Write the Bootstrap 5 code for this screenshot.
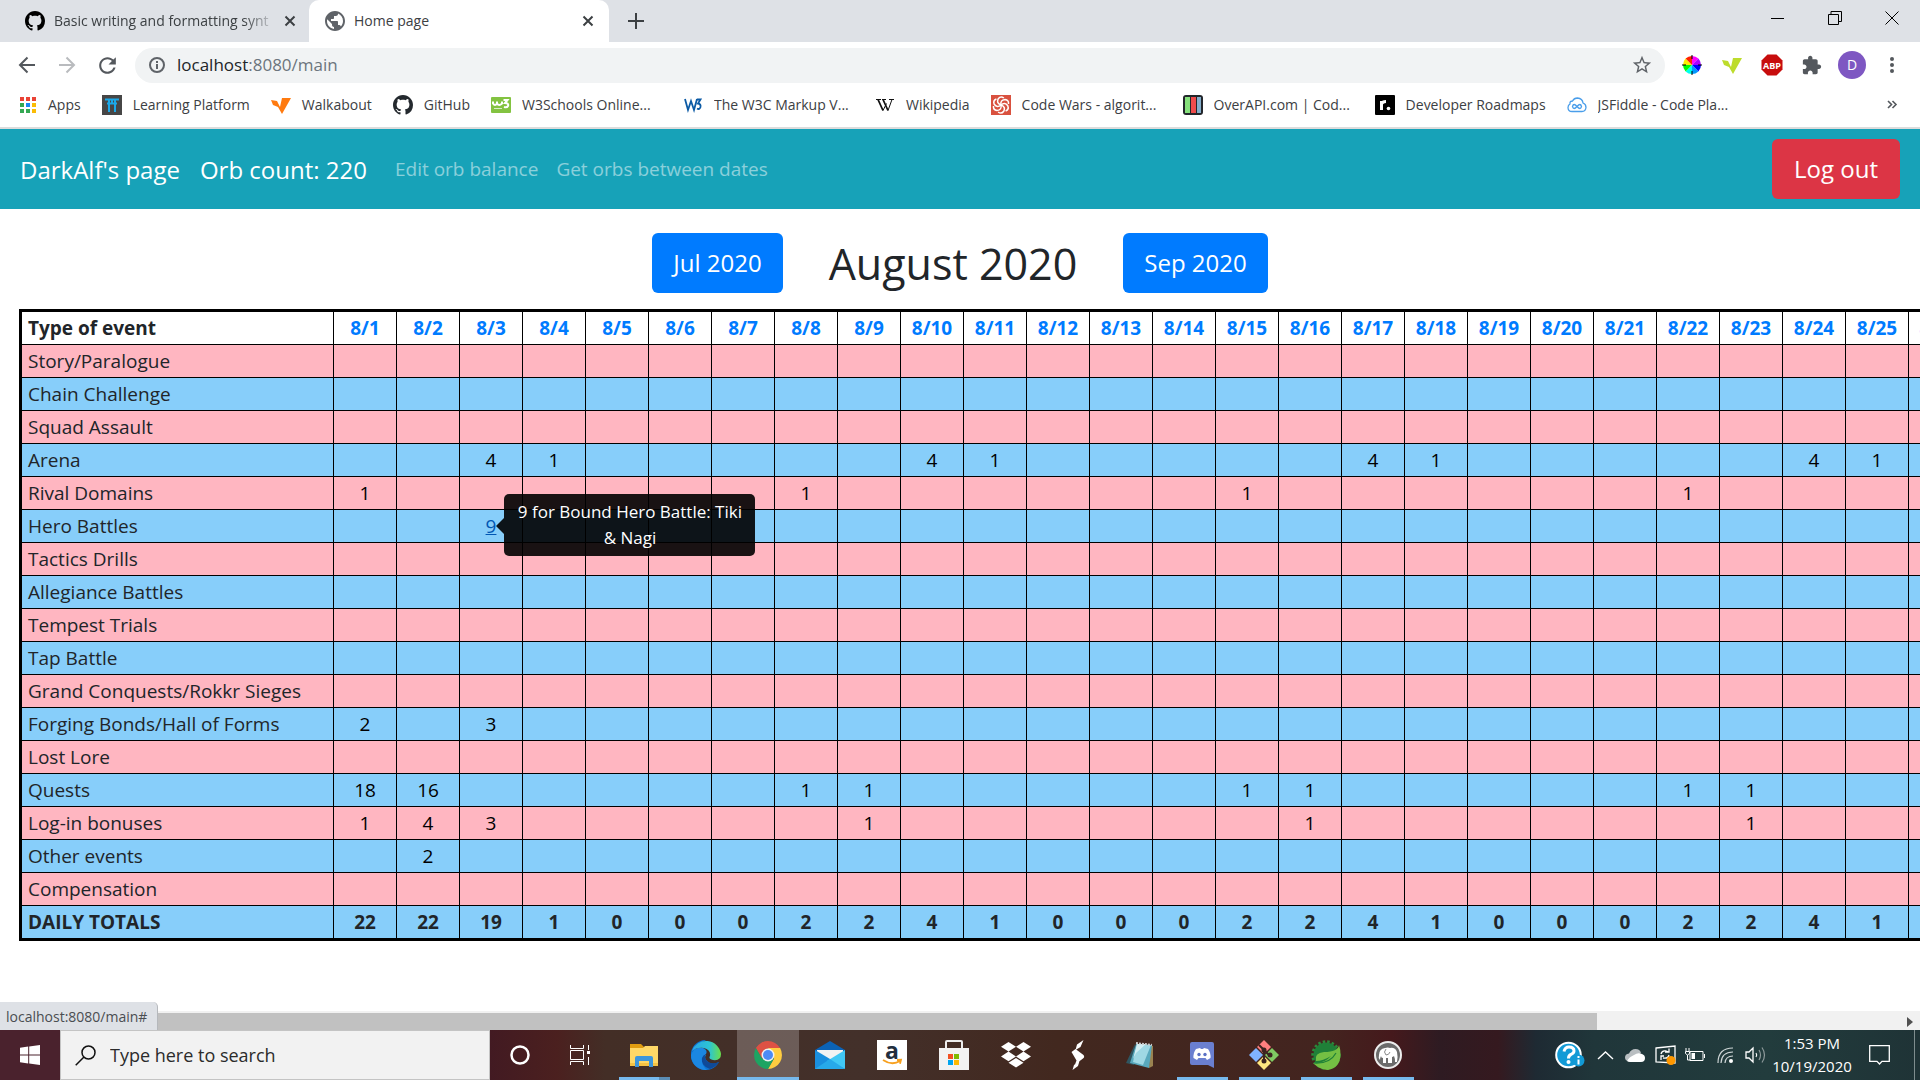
<!DOCTYPE html>
<html lang="en">
<head>
<meta charset="utf-8">
<meta name="viewport" content="width=device-width, initial-scale=1">
<title>Home page</title>
<link href="https://cdn.jsdelivr.net/npm/bootstrap@5.3.0/dist/css/bootstrap.min.css" rel="stylesheet">
<style>
  body { font-family: "Open Sans", "Noto Sans", sans-serif; color: #212529; background: #fff; }
  button, input { font-family: inherit; }
  svg { display: block; flex: none; }
  .plain { border: 0; background: none; padding: 0; display: flex; align-items: center; justify-content: center; flex: none; }

  /* tab strip */
  .tabstrip { height: 42px; background: #dee1e6; font-size: 14px; color: #3c4043; }
  .tab-item { width: 300px; height: 42px; padding: 0 12px 0 16px; }
  .tab-idle { width: 309px; padding: 0 10px 0 25px; }
  .tab-live { background: #fff; border-radius: 10px 10px 0 0; }
  .tab-idle .tab-label { -webkit-mask-image: linear-gradient(90deg, #000 85%, transparent); mask-image: linear-gradient(90deg, #000 85%, transparent); }
  .tab-label { overflow: hidden; white-space: nowrap; padding-bottom: 2px; margin-left: 9px; }
  .tab-x { width: 18px; height: 18px; }
  .tab-new { width: 54px; height: 42px; }
  .win-btn { width: 57px; height: 36px; }

  /* toolbar */
  .toolbar { height: 46px; padding: 0 8px 0 7px; }
  .tool-btn { width: 40px; height: 40px; }
  .omnibox { height: 35px; border-radius: 18px; background: #f1f3f4; padding: 0 12px; margin-left: 8px; margin-right: 7px; font-size: 17px; }
  .omnibox .url { margin-left: 10px; }
  .avatar-dot { width: 28px; height: 28px; border-radius: 50%; background: #7e57c2; color: #fff; font-size: 14px; line-height: 28px; }

  /* bookmarks */
  .bookmarks { height: 41px; padding: 0 18px 6px 18px; border-bottom: 2px solid #dcdcdc; gap: 21px; font-size: 14px; }
  .bookmarks a { color: #3c4043; text-decoration: none; gap: 11px; white-space: nowrap; }
  .bookmarks .clip { width: 140px; overflow: hidden; }

  /* page */
  .site-nav { height: 80px; background: #17a2b8; padding: 0 20px; }
  .site-nav .navbar-brand { font-size: 24px; color: #fff; margin-right: 20px; padding: 1px 0 0; }
  .site-nav .navbar-nav { gap: 2px; }
  .site-nav .nav-link { font-size: 19px; color: rgba(255,255,255,.5); padding: 1px 9px 0; }
  .btn-xl { font-size: 24px; line-height: 38px; padding: 10px 20px; border-radius: 6px; border: 1px solid transparent; }
  .btn-out { background: #dc3545; color: #fff; padding-left: 21px; padding-right: 21px; }
  .btn-month { background: #007bff; color: #fff; }
  .month-bar { gap: 46px; padding-top: 24px; margin-bottom: 16px; }
  .month-bar h1 { font-size: 43px; line-height: 58px; font-weight: 400; margin: 0; padding-top: 2px; }
  .board { padding-left: 19px; overflow: hidden; min-height: 0; }
  .table.orb-table { table-layout: fixed; width: 1953px; border-collapse: collapse; border: 3px solid #000; margin: 0; font-size: 19px; line-height: 30px; }
  .orb-table > :not(caption) > * > * { padding: 1px 0; border: 1px solid #000; text-align: center; background: none; box-shadow: none; color: #212529; }
  .orb-table > :not(caption) > * > :first-child { text-align: left; padding-left: 6px; }
  .orb-table .c-name { width: 313px; }
  .orb-table .c-day { width: 63px; }
  .orb-table tbody tr { background: #87cefa; }
  .orb-table tbody tr:nth-child(odd) { background: #ffb6c1; }
  .orb-table tbody tr:last-child { background: #87cefa; font-weight: 700; }
  .orb-table a { color: #000; text-decoration: none; }
  .orb-table thead a { color: #007bff; }
  .orb-table a.is-hover { color: #0056b3; text-decoration: underline; }
  .tip { position: absolute; left: 100%; top: 50%; transform: translateY(-50%); margin: -1px 0 0 8px; width: 251px; padding: 5px 10px; border-radius: 5px; background: rgba(0,0,0,.9); color: #fff; font-size: 17px; line-height: 26px; z-index: 2; }
  .tip::before { content: ""; position: absolute; right: 100%; top: 24px; border: 8px solid transparent; border-left: 0; border-right-color: rgba(0,0,0,.9); }

  /* scrollbar strip and status bubble */
  .hscroll { height: 19px; background: #f1f1f1; padding: 2px 7px 0 21px; }
  .hthumb { width: 83.3%; height: 17px; background: #c1c1c1; }
  .status-url { position: absolute; left: 0; bottom: 0; height: 28px; width: 158px; padding-left: 6px; background: #dee1e6; border-radius: 0 5px 0 0; border-right: 1px solid #b5b8bc; font-size: 14px; line-height: 29px; color: #4a4d51; }

  /* taskbar */
  .taskbar { height: 50px; flex: none; background: linear-gradient(90deg, #4a222d 0, #4a222d 10%, #421a22 25.5%, #4b201f 29%, #432e26 31.5%, #43302a 45%, #42281f 55%, #43241f 69%, #45191c 72.5%, #2e1b22 75%, #35191f 78%, #1e2a33 80%, #20363a 83%, #223c3d 92%, #1f3336 100%); }
  .start { width: 60px; height: 50px; }
  .find { width: 430px; height: 50px; background: #f2f2f2; border: 1px solid #c4c4c4; padding-left: 14px; gap: 14px; }
  .find input { border: 0; background: none; outline: 0; padding: 0; width: 300px; font-size: 18px; color: #2b2b2b; }
  .find input::placeholder { color: #2b2b2b; opacity: 1; }
  .task { width: 62px; height: 50px; position: relative; }
  .task-sys { width: 60px; }
  .task-sys + .task-run { margin-left: 3px; }
  .task-on { background: rgba(255,255,255,.22); }
  .task-run::after { content: ""; position: absolute; left: 6px; right: 5px; bottom: 0; height: 3px; background: #76b9ed; }
  .task-on::after { left: 0; right: 0; }
  .task-many::after { background: linear-gradient(90deg, #76b9ed 78%, #5b8db5 78%); }
  .tray { width: 30px; height: 50px; }
  .tray-wide { width: 40px; }
  .clock { width: 84px; font-size: 15px; line-height: 23px; color: #fff; text-align: center; flex: none; }
  .note { width: 50px; height: 50px; }
  .desk-edge { width: 6px; height: 50px; margin-left: 10px; border-left: 1px solid #7e8c8d; flex: none; }
</style>
<script src="https://cdn.jsdelivr.net/npm/bootstrap@5.3.0/dist/js/bootstrap.bundle.min.js"></script>
</head>
<body class="d-flex flex-column vh-100 overflow-hidden">

<svg width="0" height="0" class="position-absolute" aria-hidden="true">
  <symbol id="octo" viewBox="0 0 16 16"><path d="M8 0C3.58 0 0 3.58 0 8c0 3.54 2.29 6.53 5.47 7.59.4.07.55-.17.55-.38 0-.19-.01-.82-.01-1.49-2.01.37-2.53-.49-2.69-.94-.09-.23-.48-.94-.82-1.13-.28-.15-.68-.52-.01-.53.63-.01 1.08.58 1.23.82.72 1.21 1.87.87 2.33.66.07-.52.28-.87.51-1.07-1.78-.2-3.64-.89-3.64-3.95 0-.87.31-1.59.82-2.15-.08-.2-.36-1.02.08-2.12 0 0 .67-.21 2.2.82.64-.18 1.32-.27 2-.27.68 0 1.36.09 2 .27 1.53-1.04 2.2-.82 2.2-.82.44 1.1.16 1.92.08 2.12.51.56.82 1.27.82 2.15 0 3.07-1.87 3.75-3.65 3.95.29.25.54.73.54 1.48 0 1.07-.01 1.93-.01 2.2 0 .21.15.46.55.38A8.012 8.012 0 0 0 16 8c0-4.42-3.58-8-8-8z"/></symbol>
  <symbol id="cross" viewBox="0 0 18 18"><path d="M4.500 4.500l9 9M13.500 4.500l-9 9" stroke="#3c4043" stroke-width="2"/></symbol>
  <symbol id="vee" viewBox="0 0 20 20"><path d="M0 5l6 1 3 6 2-9h9l-9 16-4-7-5-2z"/></symbol>
</svg>

<header class="flex-shrink-0">
  <div class="tabstrip d-flex align-items-center">
    <div class="tab-item tab-idle d-flex align-items-center">
      <svg width="20" height="20"><use href="#octo"/></svg>
      <span class="tab-label flex-grow-1 me-1">Basic writing and formatting synt</span>
      <button class="plain tab-x" aria-label="Close tab"><svg width="18" height="18"><use href="#cross"/></svg></button>
    </div>
    <div class="tab-item tab-live d-flex align-items-center">
      <svg width="20" height="20" viewBox="2 2 20 20"><path fill="#5f6368" d="M12 2C6.480 2 2 6.480 2 12s4.480 10 10 10 10-4.480 10-10S17.520 2 12 2zm-1 17.930c-3.950-.49-7-3.850-7-7.930 0-.62.08-1.210.21-1.790L9 15v1c0 1.100.9 2 2 2v1.930zm6.900-2.540c-.26-.81-1-1.390-1.900-1.390h-1v-3c0-.55-.45-1-1-1H8v-2h2c.55 0 1-.45 1-1V7h2c1.100 0 2-.9 2-2v-.41c2.930 1.190 5 4.060 5 7.410 0 2.080-.8 3.970-2.100 5.390z"/></svg>
      <span class="tab-label flex-grow-1">Home page</span>
      <button class="plain tab-x" aria-label="Close tab"><svg width="18" height="18"><use href="#cross"/></svg></button>
    </div>
    <button class="plain tab-new" aria-label="New tab"><svg width="16" height="16" viewBox="0 0 16 16"><path d="M8 0v16M0 8h16" stroke="#3c4043" stroke-width="2"/></svg></button>
    <div class="d-flex ms-auto align-self-start">
      <button class="plain win-btn" aria-label="Minimize"><svg width="14" height="14"><path d="M0 7.500h13" stroke="#000"/></svg></button>
      <button class="plain win-btn" aria-label="Restore"><svg width="14" height="14" viewBox="0 0 14 14"><path d="M.5 3.500h10v10H.5zM3 3.500v-3h10.500v10H11" fill="none" stroke="#000"/></svg></button>
      <button class="plain win-btn" aria-label="Close window"><svg width="14" height="14"><path d="M.5.5l13 13M13.500.5l-13 13" stroke="#000"/></svg></button>
    </div>
  </div>

  <div class="toolbar d-flex align-items-center">
    <button class="plain tool-btn" aria-label="Back"><svg width="24" height="24" viewBox="0 0 24 24"><path fill="none" stroke="#54585d" stroke-width="2" d="M20 12H5M12.500 4.500L5 12l7.500 7.500"/></svg></button>
    <button class="plain tool-btn" aria-label="Forward"><svg width="24" height="24" viewBox="0 0 24 24"><path fill="none" stroke="#b9bbbe" stroke-width="2" d="M4 12h15M11.500 4.500L19 12l-7.500 7.500"/></svg></button>
    <button class="plain tool-btn" aria-label="Reload"><svg width="25" height="25" viewBox="0 0 24 24"><path fill="#54585d" d="M17.650 6.350C16.200 4.900 14.210 4 12 4c-4.420 0-7.990 3.580-7.990 8s3.570 8 7.990 8c3.730 0 6.840-2.550 7.730-6h-2.080c-.82 2.330-3.040 4-5.650 4-3.310 0-6-2.690-6-6s2.690-6 6-6c1.660 0 3.140.69 4.220 1.780L13 11h7V4l-2.350 2.350z"/></svg></button>
    <div class="omnibox d-flex align-items-center flex-grow-1">
      <svg width="20" height="20" viewBox="0 0 20 20"><circle cx="10" cy="10" r="7" fill="none" stroke="#5f6368" stroke-width="2"/><path d="M10 9v5M10 6v2" stroke="#5f6368" stroke-width="2"/></svg>
      <span class="url flex-grow-1"><span class="text-dark">localhost</span><span class="text-secondary">:8080/main</span></span>
      <svg width="22" height="22" viewBox="0 0 24 24"><path fill="#5f6368" d="M22 9.240l-7.190-.62L12 2 9.190 8.630 2 9.240l5.460 4.730L5.820 21 12 17.270 18.180 21l-1.630-7.030L22 9.240zM12 15.400l-3.760 2.270 1-4.280-3.320-2.880 4.380-.38L12 6.100l1.710 4.040 4.380.38-3.320 2.880 1 4.280L12 15.400z"/></svg>
    </div>
    <button class="plain tool-btn" aria-label="Color picker"><svg width="20" height="20" viewBox="-10 -10 20 20"><path fill="#f0f" d="M0 0V-9A9 9 0 0 1 6.400-6.400z"/><path fill="#a0f" d="M0 0L6.400-6.400A9 9 0 0 1 9 0z"/><path fill="#00f" d="M0 0H9A9 9 0 0 1 6.400 6.400z"/><path fill="#09f" d="M0 0L6.400 6.400A9 9 0 0 1 0 9z"/><path fill="#0fe" d="M0 0V9A9 9 0 0 1-6.400 6.400z"/><path fill="#0f0" d="M0 0L-6.400 6.400A9 9 0 0 1-9 0z"/><path fill="#fe0" d="M0 0H-9A9 9 0 0 1-6.400-6.400z"/><path fill="#f20" d="M0 0L-6.400-6.400A9 9 0 0 1 0-9z"/><path stroke="#000" d="M0-10v4M0 6v4M-10 0h4M6 0h4"/></svg></button>
    <button class="plain tool-btn" aria-label="Extension"><svg width="20" height="20" fill="#bddc2c"><use href="#vee"/></svg></button>
    <button class="plain tool-btn" aria-label="ABP"><svg width="22" height="22" viewBox="0 0 22 22"><path fill="#c70d0d" d="M6.500.5h9l6 6v9l-6 6h-9l-6-6v-9z"/><text x="11" y="14.500" font-size="9" font-weight="700" fill="#fff" text-anchor="middle" font-family="Open Sans">ABP</text></svg></button>
    <button class="plain tool-btn" aria-label="Extensions"><svg width="20" height="20" viewBox="1 0 23 23"><path fill="#54585d" d="M20.500 11H19V7c0-1.100-.9-2-2-2h-4V3.500C13 2.120 11.880 1 10.500 1S8 2.120 8 3.500V5H4c-1.100 0-1.990.9-1.990 2v3.800H3.500c1.490 0 2.700 1.210 2.700 2.700s-1.210 2.700-2.700 2.700H2V20c0 1.100.9 2 2 2h3.800v-1.500c0-1.490 1.210-2.700 2.700-2.700 1.490 0 2.700 1.210 2.700 2.700V22H17c1.100 0 2-.9 2-2v-4h1.500c1.380 0 2.500-1.120 2.500-2.500S21.880 11 20.500 11z"/></svg></button>
    <button class="plain tool-btn" aria-label="Profile"><span class="avatar-dot">D</span></button>
    <button class="plain tool-btn" aria-label="Menu"><svg width="6" height="18" viewBox="0 0 6 18" fill="#54585d"><circle cx="3" cy="3" r="2"/><circle cx="3" cy="9" r="2"/><circle cx="3" cy="15" r="2"/></svg></button>
  </div>

  <nav class="bookmarks d-flex align-items-center" aria-label="Bookmarks">
    <a href="#" class="d-flex align-items-center"><svg width="19" height="18" viewBox="0 0 19 18"><path fill="#ea4335" d="M2 1h4v4H2zM8 1h4v4H8zM14 1h4v4h-4z"/><path fill="#34a853" d="M2 7h4v4H2zM2 13h4v4H2zM8 13h4v4H8z"/><path fill="#1a86f5" d="M8 7h4v4H8z"/><path fill="#fbbc05" d="M14 7h4v4h-4zM14 13h4v4h-4z"/></svg><span>Apps</span></a>
    <a href="#" class="d-flex align-items-center"><svg width="20" height="20" viewBox="0 0 20 20"><path fill="#464646" d="M0 0h20v20H0z"/><path fill="none" stroke="#1ba8e8" stroke-width="2" d="M3 4.500h14M5 8.500h10M7 5v12M13 5v12M10 5v4"/></svg><span>Learning Platform</span></a>
    <a href="#" class="d-flex align-items-center"><svg width="20" height="20" fill="#ff7a0f"><use href="#vee"/></svg><span>Walkabout</span></a>
    <a href="#" class="d-flex align-items-center"><svg width="20" height="20" fill="#24292e"><use href="#octo"/></svg><span>GitHub</span></a>
    <a href="#" class="d-flex align-items-center"><svg width="20" height="20" viewBox="0 0 20 20"><rect y="2" width="20" height="16" rx="1" fill="#83c341"/><path fill="none" stroke="#fff" stroke-width="2" d="M2 6.500v2q2 3 4 0v-2M6 8.500q2 3 5 0v-2M12.500 5h4l-2.500 3q4 0 3 3-1 2-4 1"/><path stroke="#d9eec6" d="M3 13.500h8"/></svg><span class="clip">W3Schools Online...</span></a>
    <a href="#" class="d-flex align-items-center"><svg width="20" height="20" viewBox="0 0 20 20"><path fill="none" stroke="#0b5aa5" stroke-width="1.800" d="M2 4l3 11 3-9 3 9 3-11M14 4.500h3.500l-2.500 4q3 .5 2.500 3.500-1 3-3.500 1.500"/></svg><span class="clip">The W3C Markup V...</span></a>
    <a href="#" class="d-flex align-items-center"><svg width="20" height="20" viewBox="0 0 20 20"><path fill="none" stroke="#111" stroke-width="1.800" d="M3 4.500l5 11M8 4.500l5 11"/><path fill="none" stroke="#111" d="M8 15.500l3.500-7M13 15.500l4-11M1 4.500h5M7 4.500h4M14 4.500h5"/></svg><span>Wikipedia</span></a>
    <a href="#" class="d-flex align-items-center"><svg width="20" height="20" viewBox="-10 -10 20 20"><path fill="#d9513f" d="M-10-10h20v20h-20z"/><g fill="none" stroke="#fff" stroke-width="1.500"><path id="cw" d="M0 0Q-1-5 4-5.500Q8-5 7.500-1"/><use href="#cw" transform="rotate(60)"/><use href="#cw" transform="rotate(120)"/><use href="#cw" transform="rotate(180)"/><use href="#cw" transform="rotate(240)"/><use href="#cw" transform="rotate(300)"/></g></svg><span class="clip">Code Wars - algorit...</span></a>
    <a href="#" class="d-flex align-items-center"><svg width="20" height="20" viewBox="0 0 20 20"><rect width="20" height="20" rx="3" fill="#22262b"/><path fill="#86e07c" d="M2 2h5v16H2z"/><path fill="#ef4b4b" d="M8 2h5v16H8z"/><path fill="#85aecb" d="M14 2h4v16h-4z"/></svg><span class="clip">OverAPI.com | Cod...</span></a>
    <a href="#" class="d-flex align-items-center"><svg width="20" height="20" viewBox="0 0 20 20"><rect width="20" height="20" rx="1" fill="#000"/><path fill="none" stroke="#fff" stroke-width="3" d="M6.500 15V6M6.500 9q1-2.500 4.500-2.500"/><circle cx="13.500" cy="13.500" r="1.800" fill="#fff"/></svg><span>Developer Roadmaps</span></a>
    <a href="#" class="d-flex align-items-center"><svg width="20" height="20" viewBox="0 0 20 20"><path fill="none" stroke="#4a9eea" stroke-width="1.300" d="M5 16.500q-4 0-4-4 0-2.500 2-3.500-.5-3 2.500-3 1.500-3 5-3 5 .5 5.500 5 3 1 3 4.500-.5 4-4 4z"/><path fill="none" stroke="#4a9eea" stroke-width="1.300" d="M10 11.500q-3.500-4-4.500 0 1 4 4.500 0 3.500-4 4.500 0-1 4-4.500 0z"/></svg><span class="clip">JSFiddle - Code Pla...</span></a>
    <button class="plain ms-auto" aria-label="More bookmarks"><svg width="20" height="12" viewBox="0 0 20 12"><path fill="none" stroke="#54585d" stroke-width="1.600" d="M6 2l3.500 3.500L6 9M10.500 2L14 5.500 10.500 9"/></svg></button>
  </nav>
</header>

<main class="flex-grow-1 d-flex flex-column position-relative overflow-hidden">
  <nav class="site-nav navbar navbar-expand flex-shrink-0">
    <a class="navbar-brand" href="#">DarkAlf's page</a>
    <span class="navbar-brand">Orb count: 220</span>
    <ul class="navbar-nav">
      <li class="nav-item"><a class="nav-link" href="#">Edit orb balance</a></li>
      <li class="nav-item"><a class="nav-link" href="#">Get orbs between dates</a></li>
    </ul>
    <button class="btn btn-xl btn-out ms-auto" type="button">Log out</button>
  </nav>

  <div class="month-bar d-flex justify-content-center align-items-center flex-shrink-0">
    <button class="btn btn-xl btn-month" type="button">Jul 2020</button>
    <h1>August 2020</h1>
    <button class="btn btn-xl btn-month" type="button">Sep 2020</button>
  </div>

  <div class="board flex-grow-1">
    <table class="table orb-table">
      <colgroup id="cols"><col class="c-name"></colgroup>
      <thead><tr id="days"><th scope="col">Type of event</th></tr></thead>
      <tbody id="events"></tbody>
    </table>
  </div>

  <div class="hscroll d-flex align-items-center flex-shrink-0">
    <div class="hthumb"></div>
    <svg class="ms-auto" width="6" height="10"><path fill="#505050" d="M0 0l6 5-6 5z"/></svg>
  </div>
  <div class="status-url">localhost:8080/main#</div>
</main>

<footer class="taskbar d-flex">
  <button class="plain start" aria-label="Start"><svg width="20" height="20" viewBox="0 0 20 20" fill="#fff"><path d="M0 2.700l8.200-1.200v8H0zM9.200 1.400L20 0v9.500H9.200zM0 10.500h8.200v8L0 17.300zM9.200 10.500H20V20L9.200 18.600z"/></svg></button>
  <label class="find d-flex align-items-center flex-shrink-0"><svg width="21" height="21" viewBox="0 0 21 21"><circle cx="13.500" cy="7.500" r="6.500" fill="none" stroke="#111" stroke-width="1.500"/><path d="M9 12L.7 20.300" stroke="#111" stroke-width="1.500"/></svg><input type="text" placeholder="Type here to search" aria-label="Type here to search"></label>
  <button class="plain task task-sys" aria-label="Cortana"><svg width="20" height="20"><circle cx="10" cy="10" r="8.500" fill="none" stroke="#fff" stroke-width="2.500"/></svg></button>
  <button class="plain task task-sys" aria-label="Task View"><svg width="21" height="20" viewBox="0 0 21 20"><path fill="none" stroke="#fff" d="M.5 5.500h13v9H.5zM.5 0v3.500h13V0M.5 20v-3.500h13V20M18.500 0v5M18.500 12v8"/><path fill="#fff" d="M17 6h3v3h-3z"/></svg></button>
  <button class="plain task task-run task-many" aria-label="File Explorer"><svg width="28" height="24" viewBox="0 0 28 24"><path fill="#e09c10" d="M0 1h11l3 3v4H0z"/><path fill="#ffd867" d="M0 5h13l2-2h13v20H0z"/><path fill="#f6c344" d="M0 20h28v3H0z"/><path fill="#3d96dc" d="M5 15q0-2 2-2h14q2 0 2 2v9h-4v-6H9v6H5z"/></svg></button>
  <button class="plain task" aria-label="Edge"><svg width="30" height="30" viewBox="0 0 30 30"><defs><linearGradient id="eg" x1="0" x2="1" y1="0" y2="0"><stop offset="0" stop-color="#2ba5e5"/><stop offset=".6" stop-color="#2cc4d4"/><stop offset="1" stop-color="#6be04a"/></linearGradient></defs><path fill="#0c72d2" d="M15 0A15 15 0 1 0 28 22q-7 4-12-1-3-3-1-6L3 8z"/><path fill="#0f4a98" d="M10 14q-1 12 9 15 6-2 9-7-8 3-12-1-3-3-2-6z"/><path fill="#1b87e2" d="M0 15q3-9 12-7 5 2 3 6-3 1-4 4-1 7 5 12A15 15 0 0 1 0 15z"/><path fill="url(#eg)" d="M1 11A15 15 0 0 1 30 14q0 7-8 6-5-1-3-4 1-6-6-8-7-1-12 3z"/></svg></button>
  <button class="plain task task-run task-on" aria-label="Chrome"><svg width="28" height="28" viewBox="-14 -14 28 28"><path fill="#dd5144" d="M-12.100-7A14 14 0 0 1 12.100-7H0L-6 3.500z"/><path fill="#ffcd40" d="M12.100-7A14 14 0 0 1 0 14L6 3.500 0-7z"/><path fill="#1da462" d="M0 14A14 14 0 0 1-12.100-7L-6 3.500H6z"/><circle r="6.500" fill="#f1f1f1"/><circle r="5" fill="#4c8bf5"/></svg></button>
  <button class="plain task" aria-label="Mail"><svg width="30" height="28" viewBox="0 0 30 28"><path fill="#0b62b5" d="M0 9L15 0l15 9v4H0z"/><path fill="#f3f3f3" d="M2 9h26v9H2z"/><path fill="#1a8fde" d="M0 9l15 9v10H0z"/><path fill="#41c8f5" d="M30 9L12 20l18 8z"/><path fill="#27a9ea" d="M0 28l15-10 15 10z"/></svg></button>
  <button class="plain task" aria-label="Amazon"><svg width="30" height="30" viewBox="0 0 30 30"><path fill="#fff" d="M0 0h30v30H0z"/><text x="15" y="19" font-size="23" font-weight="700" fill="#232f3e" text-anchor="middle" font-family="Open Sans">a</text><path fill="none" stroke="#f7a01f" stroke-width="1.800" d="M6 20q9 6 17 1M20 20l4-.3-1 4"/></svg></button>
  <button class="plain task" aria-label="Store"><svg width="32" height="30" viewBox="0 0 32 30"><path fill="none" stroke="#eee" stroke-width="2" d="M8 9V2q0-1 1-1h14q1 0 1 1v7"/><path fill="#f2f2f2" d="M1 8h30v22H1z"/><path fill="#f25022" d="M10 14h5v5h-5z"/><path fill="#7fba00" d="M16 14h5v5h-5z"/><path fill="#00a4ef" d="M10 20h5v5h-5z"/><path fill="#ffb900" d="M16 20h5v5h-5z"/></svg></button>
  <button class="plain task" aria-label="Dropbox"><svg width="30" height="26" viewBox="0 0 30 26" fill="#fff"><path d="M7.500 0L15 4.800 7.500 9.600 0 4.800zM22.500 0L30 4.800 22.500 9.600 15 4.800zM7.500 9.600L15 14.400 7.500 19.200 0 14.400zM22.500 9.600L30 14.400 22.500 19.200 15 14.400zM15 16l7.500 4.800L15 25.600 7.500 20.800z"/></svg></button>
  <button class="plain task" aria-label="Stride"><svg width="14" height="30" viewBox="0 0 14 30" fill="#fff"><path d="M12.500 0L6 4.500 4.500 10 9.500 7zM4.500 9L.5 12l5 8.500L4 24.500l8-6q2-1.500.5-3.500zM8.500 21L3 25 1.500 30l5.500-4z"/></svg></button>
  <button class="plain task" aria-label="Notepad"><svg width="28" height="28" viewBox="0 0 28 28"><path fill="#9a8350" d="M24 4l3 1v20l-4 2z"/><path fill="#2f5661" d="M9 3L0 22l8 2z"/><path fill="#59a9bd" d="M10 3l16 1-3 23-19-5z"/><path fill="#9fd8e4" d="M11 3l14 1-8 20-10-3z"/><path fill="#d2eef3" d="M11 3h9l-10 9-3 6z"/><path stroke="#c9c9c9" stroke-width="2" stroke-dasharray="2 1" d="M10 2l16 2"/></svg></button>
  <button class="plain task task-run" aria-label="Discord"><svg width="24" height="26" viewBox="0 0 24 26"><path fill="#6a7fd0" d="M2 0h20q2 0 2 2v24l-6-3H2q-2 0-2-2V2q0-2 2-2z"/><path fill="#fff" d="M6 7l4-1 1 1h2l1-1 4 1q3 4 2.500 9l-3.500 2-1.500-2h-7l-1.500 2-3.500-2Q3 11 6 7z"/><circle cx="9" cy="12.500" r="1.700" fill="#5b70c4"/><circle cx="15" cy="12.500" r="1.700" fill="#5b70c4"/></svg></button>
  <button class="plain task task-run" aria-label="Git"><svg width="30" height="30" viewBox="0 0 30 30"><path fill="#ff7f7f" d="M15 0l7 7-7 7-7-7z"/><path fill="#80b3ff" d="M7 8l7 7-7 7-7-7z"/><path fill="#7fca62" d="M23 8l7 7-7 7-7-7z"/><path fill="#ffe680" d="M15 16l7 7-7 7-7-7z"/><path fill="none" stroke="#3a2420" stroke-width="2" d="M10 5l5 5v11M15 10l5 5"/><circle cx="15" cy="10" r="2.500" fill="#3a2420"/><circle cx="15" cy="21" r="2.500" fill="#3a2420"/><circle cx="21" cy="15" r="2.500" fill="#3a2420"/></svg></button>
  <button class="plain task task-run" aria-label="Spring"><svg width="30" height="30" viewBox="-15 -15 30 30"><circle r="13.200" fill="none" stroke="#2c8a3a" stroke-width="3" stroke-dasharray="2.500 2"/><circle r="12.500" fill="#1f8038"/><path fill="#74bf43" d="M13-10Q12-3-2-3-12-2-10 6-3 6 5 1-2 9-13 8-6 15 2 15 14 13 14.500 0 14.500-6 13-10z"/><path fill="none" stroke="#1f8038" stroke-width="1.200" d="M-12 8Q4 9 10-2"/></svg></button>
  <button class="plain task task-run" aria-label="MAMP"><svg width="28" height="28" viewBox="0 0 28 28"><circle cx="14" cy="14" r="13" fill="#6b6b6b" stroke="#ededed" stroke-width="2"/><path fill="#fff" d="M5 14q0-6 6-7 3-1 5 0 5-1 7 4 1 4 0 10h-2q0-4-1-6-1 1-2 1v6h-4v-5h-2v5H9v-5q-2 0-2-2-1 2-1 4-2-2-1-5z"/><path fill="none" stroke="#8a8a8a" d="M12 8q-3 3 0 6 3 0 4-3"/></svg></button>

  <div class="d-flex ms-auto align-items-center">
    <button class="plain tray tray-wide" aria-label="Help"><svg width="30" height="28" viewBox="0 0 30 28"><circle cx="13.500" cy="14" r="12.300" fill="#129ad6" stroke="#fff" stroke-width="2"/><path fill="none" stroke="#fff" stroke-width="3" d="M9 10.500q1-4.500 5-4.500 5 0 5 4 0 2-3 3.500-2.500 1-2.500 4"/><circle cx="13.500" cy="21" r="2" fill="#fff"/><circle cx="23.500" cy="19.500" r="6" fill="#129ad6"/><path stroke="#fff" stroke-width="2" d="M23.500 18.500v5M23.500 15v2"/></svg></button>
    <button class="plain tray" aria-label="Show hidden icons"><svg width="17" height="9"><path fill="none" stroke="#fff" stroke-width="1.400" d="M1 8l7.500-7L16 8"/></svg></button>
    <button class="plain tray" aria-label="OneDrive"><svg width="20" height="13" viewBox="0 0 20 13"><path fill="#b9bec1" d="M4 12Q0 12 0 8.500 0 5 4 4.500 6 0 10.500 0 15 0 16 4z"/><path fill="#fff" d="M2 12q2-4 7-6 4-3 8-1 3 1 3 4 0 4-4 4H5q-2 0-3-1z"/></svg></button>
    <button class="plain tray" aria-label="Updates"><svg width="21" height="20" viewBox="0 0 21 20"><path fill="none" stroke="#fff" stroke-width="1.300" d="M1 3L20 1v17L1 17z"/><path fill="none" stroke="#fff" stroke-width="1.300" d="M6 9q1-4 5-3l3 1M14 3.500V7h-4M14 10q-1 4-6 3M6 15v-4h3"/><circle cx="16" cy="15.500" r="4.500" fill="#ff9800"/></svg></button>
    <button class="plain tray" aria-label="Battery"><svg width="20" height="14" viewBox="0 0 20 14"><path fill="none" stroke="#fff" d="M5 3.500h13v9H5zM19.500 6v4M1 0v3M4 0v3M.5 3.500h4v2q-2 3-4 0zM2.500 7v5h3"/><path fill="#fff" d="M6.500 5H10v6H6.500z"/></svg></button>
    <button class="plain tray" aria-label="Network"><svg width="17" height="16" viewBox="0 0 17 16"><path fill="none" stroke="#cfd6d7" stroke-width="1.200" d="M1 16Q1 1 16 1M4 16Q4.500 5 16 5M8 16Q8.500 9 16 9"/><circle cx="14" cy="14" r="2" fill="#fff"/></svg></button>
    <button class="plain tray" aria-label="Volume"><svg width="21" height="18" viewBox="0 0 21 18"><path fill="none" stroke="#fff" stroke-width="1.300" d="M1 6h3l4-4v14l-4-4H1z"/><path fill="none" stroke="#fff" stroke-width="1.200" d="M11 7q1.500 2 0 4"/><path fill="none" stroke="#8d999a" stroke-width="1.200" d="M14 4q3 5 0 10M17 1.500q5 7.500 0 15"/></svg></button>
    <div class="clock">1:53 PM<br>10/19/2020</div>
    <button class="plain note" aria-label="Notifications"><svg width="21" height="20" viewBox="0 0 21 20"><path fill="none" stroke="#fff" stroke-width="1.300" d="M.7.7h19.600v15.600H13L10.500 19 8 16.300H.7z"/></svg></button>
    <div class="desk-edge"></div>
  </div>
</footer>

<script>
  // orbs earned per event, keyed by day of the month
  const DAYS = 26, TOTALLED = 25;
  const events = [
    ["Story/Paralogue", {}],
    ["Chain Challenge", {}],
    ["Squad Assault", {}],
    ["Arena", {3: 4, 4: 1, 10: 4, 11: 1, 17: 4, 18: 1, 24: 4, 25: 1}],
    ["Rival Domains", {1: 1, 8: 1, 15: 1, 22: 1}],
    ["Hero Battles", {3: 9}],
    ["Tactics Drills", {}],
    ["Allegiance Battles", {}],
    ["Tempest Trials", {}],
    ["Tap Battle", {}],
    ["Grand Conquests/Rokkr Sieges", {}],
    ["Forging Bonds/Hall of Forms", {1: 2, 3: 3}],
    ["Lost Lore", {}],
    ["Quests", {1: 18, 2: 16, 8: 1, 9: 1, 15: 1, 16: 1, 22: 1, 23: 1}],
    ["Log-in bonuses", {1: 1, 2: 4, 3: 3, 9: 1, 16: 1, 23: 1}],
    ["Other events", {2: 2}],
    ["Compensation", {}]
  ];
  const tip = '<span class="position-relative d-inline-block"><a href="#" class="is-hover" aria-describedby="tip9">9</a>' +
    '<span class="tip" role="tooltip" id="tip9">9 for Bound Hero Battle: Tiki &amp; Nagi</span></span>';
  let cols = "", head = "", body = "", sums = "";
  for (let d = 1; d <= DAYS; d++) {
    cols += '<col class="c-day">';
    head += `<th scope="col"><a href="#">8/${d}</a></th>`;
    sums += `<td>${d > TOTALLED ? "" : events.reduce((t, e) => t + (e[1][d] || 0), 0)}</td>`;
  }
  for (const [name, orbs] of events) {
    body += `<tr><td>${name}</td>`;
    for (let d = 1; d <= DAYS; d++) {
      const n = orbs[d];
      body += `<td>${!n ? "" : n === 9 ? tip : `<a href="#">${n}</a>`}</td>`;
    }
    body += "</tr>";
  }
  document.getElementById("cols").insertAdjacentHTML("beforeend", cols);
  document.getElementById("days").insertAdjacentHTML("beforeend", head);
  document.getElementById("events").innerHTML = body + `<tr><td>DAILY TOTALS</td>${sums}</tr>`;
</script>
</body>
</html>
